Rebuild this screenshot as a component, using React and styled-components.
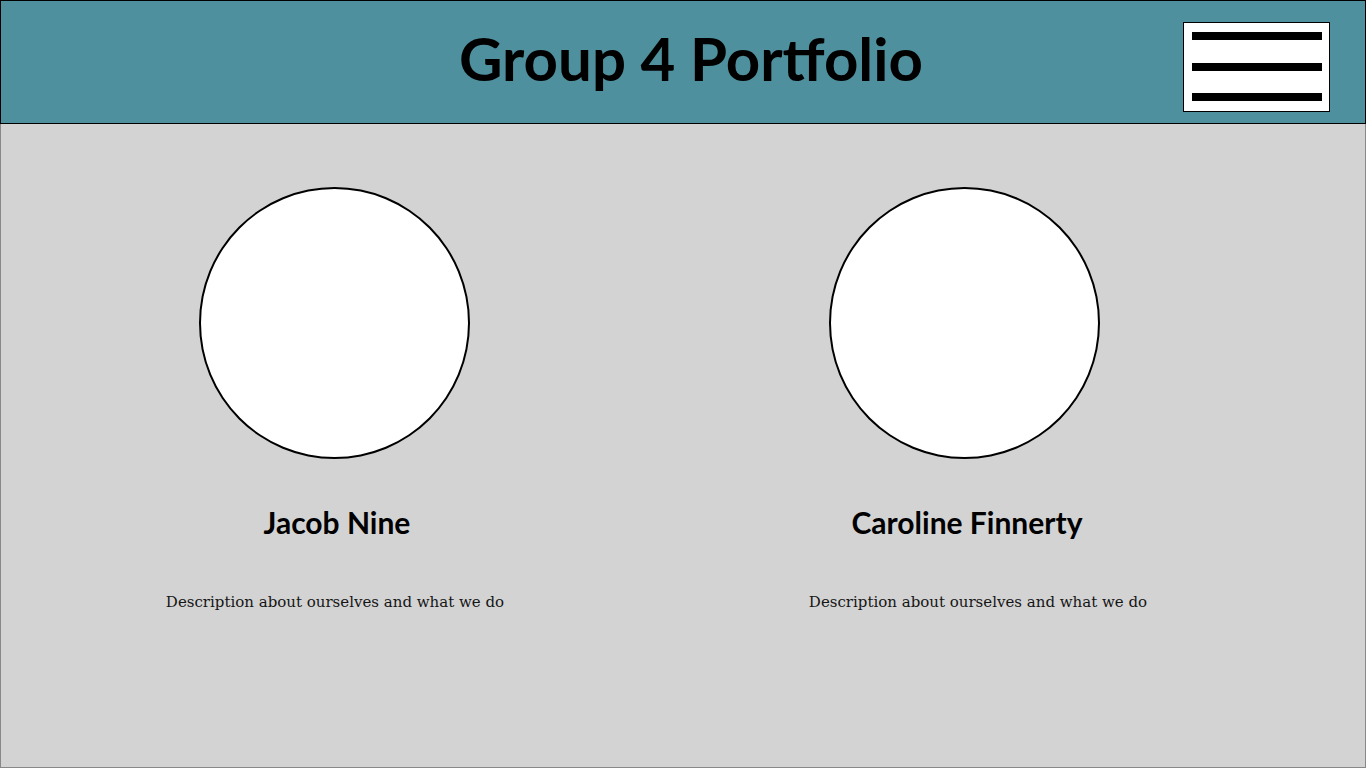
import React from 'react'
import styled, { createGlobalStyle } from 'styled-components'

const GlobalStyle = createGlobalStyle`
  html, body {
    margin: 0;
    padding: 0;
  }
  body {
    font-family: "Lato", sans-serif;
  }
  * {
    box-sizing: border-box;
  }
`

const Page = styled.div`
  width: 1366px;
  height: 768px;
  display: flex;
  flex-direction: column;
`

const Header = styled.header`
  height: 124px;
  background: #4f909e;
  border: 1px solid #000;
  display: flex;
  align-items: center;
  justify-content: center;
  position: relative;
`

const Title = styled.h1`
  margin: -9px 0 0 16px;
  font-family: "Lato", sans-serif;
  font-weight: 700;
  font-size: 60px;
  color: #000;
  line-height: 1;
`

const MenuButton = styled.div`
  position: absolute;
  right: 35px;
  top: 21px;
  width: 147px;
  height: 90px;
  background: #fff;
  border: 1px solid #000;
  display: flex;
  flex-direction: column;
  justify-content: space-between;
  padding: 9px 7px 10px 8px;
`

const MenuBar = styled.span`
  display: block;
  height: 8px;
  background: #000;
`

const Main = styled.main`
  flex: 1;
  background: #d3d3d3;
  border: 1px solid #888;
  border-top: none;
  display: flex;
  padding: 63px 0 0 18px;
`

const Member = styled.section`
  width: 630px;
  display: flex;
  flex-direction: column;
  align-items: center;
`

const Avatar = styled.div`
  width: 271px;
  height: 272px;
  border-radius: 50%;
  background: #fff;
  border: 2px solid #000;
`

const Name = styled.h2`
  margin: 45px 0 0;
  font-family: "Lato", sans-serif;
  font-weight: 700;
  font-size: 30px;
  line-height: 36px;
  color: #000;
  transform: translateX(${p => p.shift || 0}px);
`

const Description = styled.p`
  margin: 52px 0 0;
  font-family: "DejaVu Serif", serif;
  font-size: 15px;
  line-height: 20px;
  color: #151515;
  transform: translateX(${p => p.shift || 0}px);
`

const members = [
  { name: 'Jacob Nine', nameShift: 3, descShift: 1 },
  { name: 'Caroline Finnerty', nameShift: 3, descShift: 14 },
]

export default function App() {
  return (
    <Page>
      <GlobalStyle />
      <Header>
        <Title>Group 4 Portfolio</Title>
        <MenuButton>
          <MenuBar />
          <MenuBar />
          <MenuBar />
        </MenuButton>
      </Header>
      <Main>
        {members.map(m => (
          <Member key={m.name}>
            <Avatar />
            <Name shift={m.nameShift}>{m.name}</Name>
            <Description shift={m.descShift}>Description about ourselves and what we do</Description>
          </Member>
        ))}
      </Main>
    </Page>
  )
}
